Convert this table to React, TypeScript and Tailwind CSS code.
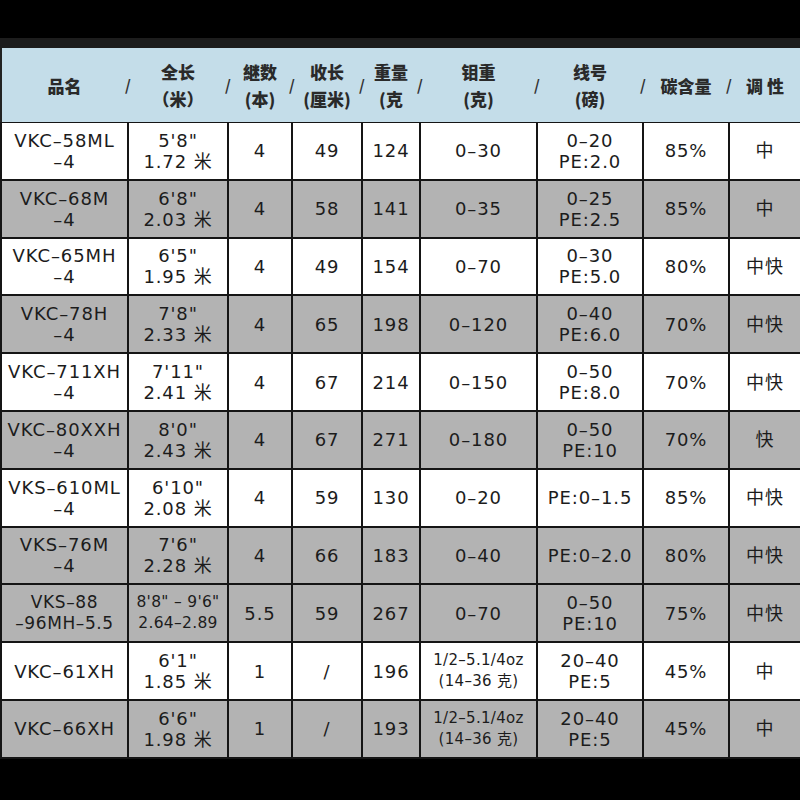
import React from 'react';

type Cell = string | string[];

const cols = ['w-[125px]', 'w-[98px]', 'w-[62px]', 'w-[68px]', 'w-[56px]', 'w-[115px]', 'w-[104px]', 'w-[84px]', 'w-[70px]'];

const head: string[][] = [
  ['品名'],
  ['全长', '（米）'],
  ['継数', '(本)'],
  ['收长', '(厘米)'],
  ['重量', '(克'],
  ['钼重', '(克)'],
  ['线号', '(磅)'],
  ['碳含量'],
  ['调 性'],
];

const rows: { gray: boolean; cells: Cell[] }[] = [
  { gray: false, cells: [['VKC–58ML', '–4'], ['5\'8"', '1.72 米'], '4', '49', '124', '0–30', ['0–20', 'PE:2.0'], '85%', '中'] },
  { gray: true, cells: [['VKC–68M', '–4'], ['6\'8"', '2.03 米'], '4', '58', '141', '0–35', ['0–25', 'PE:2.5'], '85%', '中'] },
  { gray: false, cells: [['VKC–65MH', '–4'], ['6\'5"', '1.95 米'], '4', '49', '154', '0–70', ['0–30', 'PE:5.0'], '80%', '中快'] },
  { gray: true, cells: [['VKC–78H', '–4'], ['7\'8"', '2.33 米'], '4', '65', '198', '0–120', ['0–40', 'PE:6.0'], '70%', '中快'] },
  { gray: false, cells: [['VKC–711XH', '–4'], ['7\'11"', '2.41 米'], '4', '67', '214', '0–150', ['0–50', 'PE:8.0'], '70%', '中快'] },
  { gray: true, cells: [['VKC–80XXH', '–4'], ['8\'0"', '2.43 米'], '4', '67', '271', '0–180', ['0–50', 'PE:10'], '70%', '快'] },
  { gray: false, cells: [['VKS–610ML', '–4'], ['6\'10"', '2.08 米'], '4', '59', '130', '0–20', 'PE:0–1.5', '85%', '中快'] },
  { gray: true, cells: [['VKS–76M', '–4'], ['7\'6"', '2.28 米'], '4', '66', '183', '0–40', 'PE:0–2.0', '80%', '中快'] },
  { gray: true, cells: [['VKS–88', '–96MH–5.5'], ['8\'8" – 9\'6"', '2.64–2.89'], '5.5', '59', '267', '0–70', ['0–50', 'PE:10'], '75%', '中快'] },
  { gray: false, cells: ['VKC–61XH', ['6\'1"', '1.85 米'], '1', '/', '196', ['1/2–5.1/4oz', '(14–36 克)'], ['20–40', 'PE:5'], '45%', '中'] },
  { gray: true, cells: ['VKC–66XH', ['6\'6"', '1.98 米'], '1', '/', '193', ['1/2–5.1/4oz', '(14–36 克)'], ['20–40', 'PE:5'], '45%', '中'] },
];

const bodyFont = { fontFamily: '"DejaVu Sans", "Noto Sans CJK SC", sans-serif' };
const headFont = { fontFamily: '"Noto Sans CJK SC", sans-serif' };

function Slash() {
  return (
    <div className="w-[2px] flex items-center justify-center overflow-visible">
      <span className="text-[15px] text-[#333] font-bold">/</span>
    </div>
  );
}

function sizeFor(ri: number, ci: number, multi: boolean) {
  if (ci === 5 && multi) return 'text-[15px] tracking-[0.3px]';
  if (ci === 1 && ri === 8) return 'text-[15.5px] tracking-[0.3px]';
  if (ci === 0 && ri === 8) return 'text-[17px] tracking-[0.6px]';
  return 'text-[18px] tracking-[0.9px]';
}

export default function App() {
  return (
    <div className="w-[800px] h-[800px] bg-black pt-[38px] overflow-hidden">
      <div className="h-[10px] bg-[#1d1d1d]" />

      {/* header */}
      <div className="flex h-[74px] bg-[#c4dde9] border-l-2 border-[#222]" style={headFont}>
        {head.map((h, i) => (
          <React.Fragment key={i}>
            {i > 0 && <Slash />}
            <div className={`${cols[i]} flex flex-col items-center justify-center text-[17px] font-black leading-[27px] text-[#2a2a2a]`}>
              {h.map((t, j) => (
                <span key={j} className="whitespace-nowrap">{t}</span>
              ))}
            </div>
          </React.Fragment>
        ))}
      </div>

      {/* body */}
      <div className="flex flex-col gap-[2px] bg-[#151515] pt-[1px] pb-[2px] pl-[2px]" style={bodyFont}>
        {rows.map((r, ri) => (
          <div key={ri} className="flex gap-[2px] h-[55.8px]">
            {r.cells.map((c, ci) => (
              <div
                key={ci}
                className={`${cols[ci]} ${r.gray ? 'bg-[#b3b3b3]' : 'bg-white'} flex flex-col items-center justify-center text-[#1c1c1c] leading-[21px] ${sizeFor(ri, ci, Array.isArray(c))}`}
              >
                {(Array.isArray(c) ? c : [c]).map((t, j) => (
                  <span key={j} className="whitespace-nowrap">{t}</span>
                ))}
              </div>
            ))}
          </div>
        ))}
      </div>
    </div>
  );
}
